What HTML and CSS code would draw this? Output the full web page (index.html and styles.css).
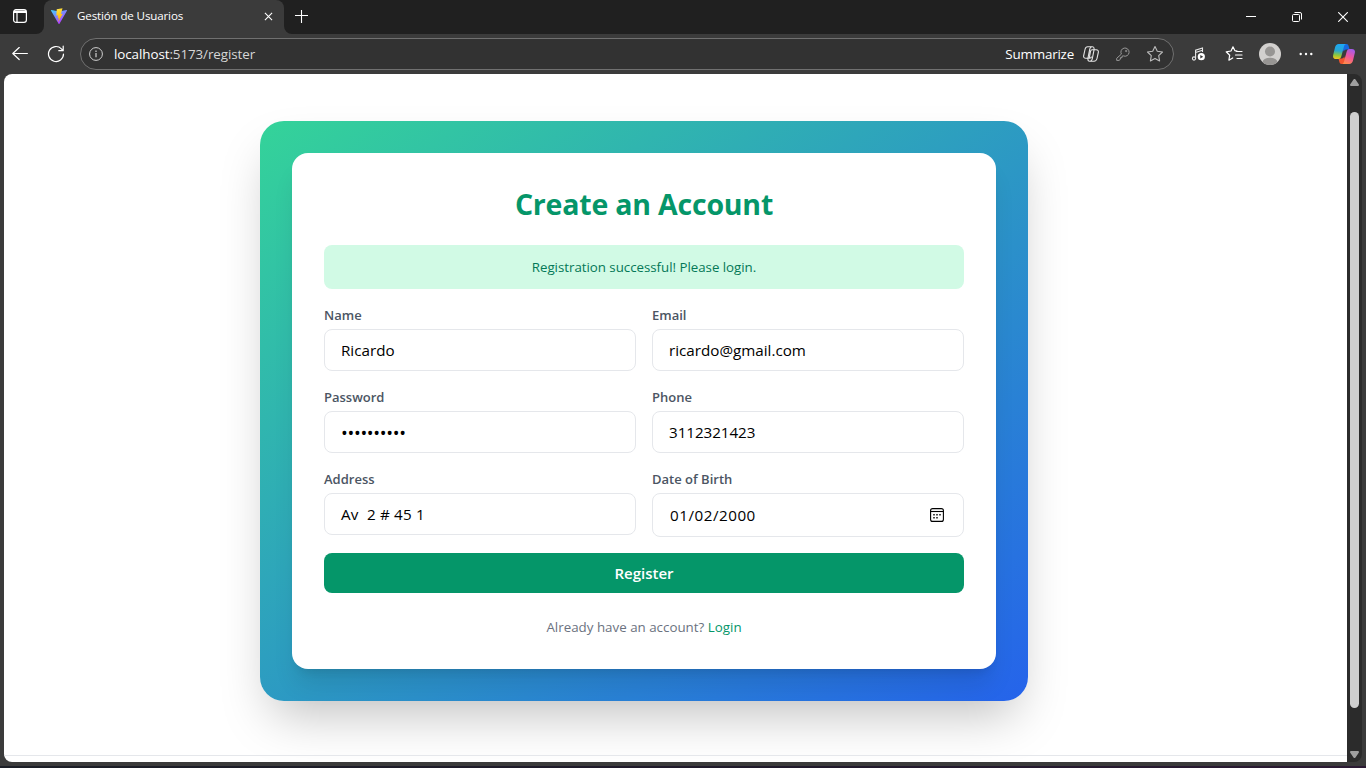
FILE: index.html
```html
<!DOCTYPE html>
<html lang="es">
<head>
<meta charset="utf-8">
<title>Gestión de Usuarios</title>
<link rel="stylesheet" href="styles.css">
</head>
<body>
<div class="window">
  <header class="tabstrip">
    <div class="workspaces">
      <svg width="16" height="16" viewBox="0 0 16 16" fill="none" stroke="#fff" stroke-width="1.2"><rect x="1.6" y="1.6" width="12.8" height="12.8" rx="2.4"/><path d="M2 3.2h12M2 4.4h12M5 5v9" /></svg>
    </div>
    <div class="tab">
      <svg class="favicon" width="16" height="16" viewBox="0 0 32 32">
        <defs>
          <linearGradient id="vite-a" x1="0" y1="0" x2=".6" y2="1"><stop offset="0" stop-color="#41d1ff"/><stop offset="1" stop-color="#bd34fe"/></linearGradient>
          <linearGradient id="vite-b" x1=".4" y1="0" x2=".6" y2="1"><stop offset="0" stop-color="#ffea83"/><stop offset=".1" stop-color="#ffdd35"/><stop offset="1" stop-color="#ffa800"/></linearGradient>
        </defs>
        <path fill="url(#vite-a)" d="M31.9 5.7 17 31.4a1 1 0 0 1-1.8 0L.1 5.7a1 1 0 0 1 1-1.5l15 2.7 14.7-2.7a1 1 0 0 1 1.1 1.5z"/>
        <path fill="url(#vite-b)" d="M23 .3 11.500 2.500l-.8 13 3.500-.8-1 5.500 2.500-.7-1.600 8.500L23.500 11.300l-3.600.7z"/>
      </svg>
      <span class="tab-title">Gestión de Usuarios</span>
      <svg class="tab-close" width="9" height="9" viewBox="0 0 10 10" stroke="#fff" stroke-width="1.2"><path d="M1 1l8 8M9 1L1 9"/></svg>
    </div>
    <svg class="new-tab" width="14" height="14" viewBox="0 0 14 14" stroke="#fff" stroke-width="1.1"><path d="M6.500 0v13M0 5.500h13"/></svg>
    <div class="controls">
      <svg width="10" height="10" viewBox="0 0 10 10" stroke="#fff"><path d="M0 4.5h10"/></svg>
      <svg width="10" height="10" viewBox="0 0 10 10" fill="none" stroke="#fff"><rect x=".5" y="2.5" width="7" height="7" rx="1"/><path d="M2.5.5H8A1.5 1.5 0 0 1 9.5 2v5.5"/></svg>
      <svg width="10" height="10" viewBox="0 0 10 10" stroke="#fff" stroke-width="1.1"><path d="M.2.2l9.6 9.6M9.8.2L.2 9.8"/></svg>
    </div>
  </header>

  <div class="toolbar">
    <svg class="back" width="16" height="14" viewBox="0 0 16 14" fill="none" stroke="#fff" stroke-width="1.2" stroke-linecap="round" stroke-linejoin="round"><path d="M15.4 6.500H.8M7.200.5.8 6.500l6.400 6"/></svg>
    <svg class="reload" width="18" height="18" viewBox="0 0 18 18" fill="none" stroke="#fff" stroke-width="1.2" stroke-linecap="round" stroke-linejoin="round"><path d="M16.5 9a7.5 7.5 0 1 1-2.1-5.2l1.6 1.7M16.2 1.2v4.5h-4.4"/></svg>
    <div class="address">
      <svg class="info" width="14" height="14" viewBox="0 0 14 14" fill="none" stroke="#d0d0d0"><circle cx="7" cy="7" r="6.4"/><path d="M7 6v4.3M7 3.6v1.3" stroke-width="1.2"/></svg>
      <span class="url">localhost<span class="url-rest">:5173/register</span></span>
      <span class="summarize">Summarize</span>
      <svg class="assist" width="16" height="16" viewBox="0 0 16 16" fill="none" stroke="#e4e4e4" stroke-width="1.100" stroke-linejoin="round"><path d="M4.600.8h4.900c1.200 0 1.600.8 1.600 2v.9h2c1.800 0 2.600 1.100 2.200 2.800l-1.300 6c-.4 1.800-1.300 2.700-3 2.700H6.500c-1.200 0-1.600-.8-1.600-2v-.9h-2c-1.800 0-2.600-1.100-2.200-2.800L2 3.500C2.400 1.700 3 .8 4.600.8z"/><path d="M8.400.9c-.9.300-1.300 1-1.600 2L4.900 12.300M11.100 3.700H9.200c-1.100 0-1.500.6-1.700 1.600L6.200 12.300H4.900M7.600 15.100c.9-.3 1.300-1 1.600-2l1.900-9.400M6.200 12.300h.6c1.100 0 1.500-.6 1.700-1.600"/></svg>
      <svg class="key" width="14" height="14" viewBox="0 0 14 14" fill="none" stroke="#999" stroke-linejoin="round"><path d="M5.400 7.100A4.100 4.100 0 1 1 7.400 8.900L6 9.200v1.500H4.400v1.600L3 13.400H.7v-2.100z"/><circle cx="10.200" cy="4" r=".7"/></svg>
      <svg class="star" width="18" height="18" viewBox="0 0 18 18" fill="none" stroke="#bcbcbc" stroke-width="1.1" stroke-linejoin="round"><path d="m9 1.500 2.300 4.800 5.200.7-3.800 3.700.9 5.200L9 13.400l-4.600 2.500.9-5.200L1.500 7l5.200-.7z"/></svg>
    </div>
    <div class="actions">
      <svg width="16" height="16" viewBox="0 0 16 16" fill="none" stroke="#e8e8e8" stroke-width="1.100"><circle cx="3" cy="12.500" r="1.600"/><path d="M4.600 12.500V4.200L11.500 2v4M4.600 6.500l6.900-2.200"/><circle cx="10.300" cy="10.700" r="3.600" fill="#fff" stroke="none"/><path d="m9.300 8.900 2.900 1.800-2.900 1.800z" fill="#333" stroke="none"/></svg>
      <svg width="18" height="18" viewBox="0 0 18 18" fill="none" stroke="#fff" stroke-width="1.200" stroke-linejoin="round" stroke-linecap="round"><path d="M12 6 9.800 5.600 8 1.800 6 6l-4.800.8 3.500 3.400-.8 5 3.800-2.200M11.300 6.500H17M10.500 10H17M12 13.500h5"/></svg>
      <svg width="22" height="22" viewBox="0 0 22 22"><defs><clipPath id="avatar"><circle cx="11" cy="11" r="11"/></clipPath></defs><g clip-path="url(#avatar)"><path fill="#d2d0ce" d="M0 0h22v22H0z"/><circle cx="11" cy="8.500" r="5" fill="#979593"/><ellipse cx="11" cy="19.500" rx="7.500" ry="4.800" fill="#979593"/></g></svg>
      <svg width="14" height="4" viewBox="0 0 14 4" fill="#fff"><circle cx="1.700" cy="2" r="1.200"/><circle cx="7" cy="2" r="1.200"/><circle cx="12.300" cy="2" r="1.200"/></svg>
      <svg width="22" height="20" viewBox="0 0 22 20">
        <defs>
          <linearGradient id="cp-left" x1=".4" y1="0" x2=".3" y2="1"><stop offset="0" stop-color="#1ca8f5"/><stop offset=".45" stop-color="#2aa7cf"/><stop offset=".75" stop-color="#8fc93a"/><stop offset="1" stop-color="#f4c520"/></linearGradient>
          <linearGradient id="cp-right" x1=".7" y1="0" x2=".3" y2="1"><stop offset="0" stop-color="#a45bea"/><stop offset=".5" stop-color="#f0569b"/><stop offset="1" stop-color="#ff8a48"/></linearGradient>
        </defs>
        <path fill="#1769e0" d="M7 0h6.300c1.500 0 2 .8 2.400 2.200l.9 3.300h-3.400c-1.200 0-2 .8-2.400 2z"/>
        <path fill="#f0532d" d="M5.500 14.500h3.300c1.200 0 2-.8 2.400-2L14 20H8.700c-1.500 0-2-.8-2.400-2.200z"/>
        <path fill="url(#cp-left)" d="M5.800 0H13c-1.300.4-1.700 1.300-2.100 2.800L8.700 11c-.7 2.600-1.300 4-3.300 4H3.200C.6 15-.4 13.300.2 10.900L2 3.500C2.600 1.200 3.700 0 5.800 0z"/>
        <path fill="url(#cp-right)" d="M16.200 20H9c1.300-.4 1.700-1.300 2.100-2.800L13.300 9c.7-2.600 1.300-4 3.300-4h2.200c2.600 0 3.600 1.700 3 4.100L20 16.500c-.6 2.300-1.700 3.500-3.800 3.500z"/>
      </svg>
    </div>
  </div>

  <div class="viewport">
    <main class="page">
      <section class="frame">
        <div class="card">
          <h1 class="title"><span>Create an Account</span></h1>
          <p class="alert"><span>Registration successful! Please login.</span></p>
          <div class="fields">
            <div class="field"><span class="label">Name</span><div class="input"><span class="value">Ricardo</span></div></div>
            <div class="field"><span class="label">Email</span><div class="input"><span class="value">ricardo@gmail.com</span></div></div>
            <div class="field"><span class="label">Password</span><div class="input masked"><span class="value dots">••••••••••</span></div></div>
            <div class="field"><span class="label">Phone</span><div class="input"><span class="value phone">3112321423</span></div></div>
            <div class="field"><span class="label">Address</span><div class="input"><span class="value street">Av  2 # 45 1</span></div></div>
            <div class="field"><span class="label">Date of Birth</span><div class="input date"><span class="value day">01/02/2000</span>
              <svg width="14" height="14" viewBox="0 0 14 14" fill="none" stroke="#000" stroke-width="1.100"><rect x=".6" y=".6" width="12.800" height="12.800" rx="2"/><path d="M.6 3.500h12.800"/><path stroke="none" fill="#000" d="M6.300 6h1.400v1.400H6.300zM9.300 6h1.400v1.400H9.300zM3.300 9h1.400v1.400H3.300zM6.300 9h1.400v1.400H6.300zM3.300 6h1.400v1.400H3.300z"/></svg></div></div>
          </div>
          <div class="register"><span>Register</span></div>
          <p class="signin"><span class="question">Already have an account?</span> <span class="login">Login</span></p>
        </div>
      </section>
      <div class="page-footer"></div>
    </main>
    <div class="scrollbar">
      <svg width="9" height="7" viewBox="0 0 9 7" fill="#9f9f9f"><path d="M3.500.6a1.200 1.200 0 0 1 2 0L8.900 5.500Q9.200 7 8 7H1Q-.2 7 .1 5.500z"/></svg>
      <div class="thumb"></div>
      <svg width="9" height="7" viewBox="0 0 9 7" fill="#9f9f9f"><path d="M3.500 6.400a1.200 1.200 0 0 0 2 0L8.900 1.500Q9.200 0 8 0H1Q-.2 0 .1 1.500z"/></svg>
    </div>
  </div>
  <div class="taskbar-edge"></div>
</div>
</body>
</html>
```
FILE: styles.css
```css
* { box-sizing: border-box; }
body { margin: 0; font-family: "Open Sans", "Noto Sans", sans-serif; }
h1, p { margin: 0; }
svg { display: block; flex: none; }
span { white-space: pre; }

.window { width: 1366px; height: 768px; display: flex; flex-direction: column; background: #3b3b3b; overflow: hidden; }

.tabstrip { height: 34px; flex: none; display: flex; align-items: flex-start; background: linear-gradient(#202020 20px, #3b3b3b 20px); color: #fff; }
.workspaces { width: 44px; height: 34px; padding: 8px 0 0 12px; background: #202020; border-bottom-right-radius: 8px; }
.tab { width: 240px; height: 34px; display: flex; align-items: center; padding: 0 11px 2px 7px; background: #3b3b3b; border-radius: 8px 8px 0 0; }
.tab-title { font-size: 11.6px; line-height: 16px; margin-left: 10px; letter-spacing: -0.15px; }
.tab-close { margin-left: auto; }
.new-tab { width: 32px; height: 34px; padding: 10px 7px 10px 11px; background: #202020; border-bottom-left-radius: 8px; }
.controls { flex: 1; height: 34px; display: flex; justify-content: flex-end; align-items: center; gap: 36px; padding-right: 18px; background: #202020; }

.toolbar { height: 40px; flex: none; display: flex; align-items: center; color: #fff; }
.back { margin-left: 12px; }
.reload { margin-left: 19px; }
.address { width: 1094px; flex: none; height: 32px; margin-left: 15px; display: flex; align-items: center; background: #323232; border: 1px solid #707070; border-radius: 16px; padding: 0 9px 0 8px; font-size: 13.4px; line-height: 20px; }
.url { margin-left: 11px; letter-spacing: -0.08px; }
.url-rest { color: #d6d6d6; }
.summarize { margin-left: auto; letter-spacing: -0.2px; }
.assist { margin-left: 9px; }
.key { margin-left: 17px; }
.star { margin-left: 16px; }
.actions { display: flex; align-items: center; margin-left: 17px; }
.actions svg + svg { margin-left: 18px; }
.actions svg:nth-child(3) { margin-left: 16px; }
.actions svg:nth-child(5) { margin-left: 20px; }

.viewport { height: 688px; margin: 0 4px; flex: none; display: flex; border-radius: 8px; overflow: hidden; background: #2b2b2b; }
.page { width: 1343px; flex: none; background: #fff; padding: 47px 0 0 256px; overflow: hidden; }
.frame { width: 768px; height: 580px; padding: 32px; border-radius: 24px; background: linear-gradient(to bottom right, #34d399, #2563eb); box-shadow: 0 25px 50px -12px rgba(0, 0, 0, .25); }
.card { height: 516px; padding: 32px; border-radius: 16px; background: #fff; box-shadow: 0 20px 25px -5px rgba(0, 0, 0, .1), 0 8px 10px -6px rgba(0, 0, 0, .1); }
.title { font-size: 28.5px; line-height: 36px; font-weight: 700; text-align: center; color: #059669; letter-spacing: -0.2px; margin-bottom: 24px; padding-top: 1px; height: 36px; }
.alert { height: 44px; padding: 12px; border-radius: 8px; background: #d1fae5; color: #047857; font-size: 13.3px; line-height: 21px; text-align: center; letter-spacing: -0.02px; margin-bottom: 16px; }
.fields { display: grid; grid-template-columns: 1fr 1fr; gap: 16px; align-items: start; }
.label { display: block; font-size: 13px; line-height: 20px; font-weight: 600; color: #4b5563; margin-bottom: 4px; }
.input { height: 42px; border: 1px solid #e5e7eb; border-radius: 8px; padding: 0 16px 1px; display: flex; align-items: center; justify-content: space-between; font-size: 15.2px; line-height: 24px; color: #000; }
.phone { letter-spacing: -0.05px; }
.street { letter-spacing: 0.2px; }
.masked { padding: 1px 16px 0; }
.dots { font-size: 18px; letter-spacing: -0.3px; }
.day { letter-spacing: 0.52px; }
.date { height: 44px; padding: 0 19px 0 17px; }
.register { height: 40px; margin-top: 16px; border-radius: 8px; background: #059669; color: #fff; font-size: 15px; line-height: 40px; font-weight: 600; text-align: center; }
.signin { margin-top: 24px; text-align: center; font-size: 13.35px; line-height: 21px; color: #6b7280; }
.login { color: #059669; }
.page-footer { height: 1px; margin: 54px 0 0 -256px; background: #e5e7eb; }

.scrollbar { width: 15px; display: flex; flex-direction: column; align-items: center; padding: 5px 0 4px; }
.thumb { width: 9px; height: 596px; margin-top: 26px; margin-bottom: auto; border-radius: 5px; background: #cfcfcf; }
.taskbar-edge { height: 2px; margin-top: auto; background: linear-gradient(90deg, #1b1e26, #20192b 60%, #2b1a33); }
```
